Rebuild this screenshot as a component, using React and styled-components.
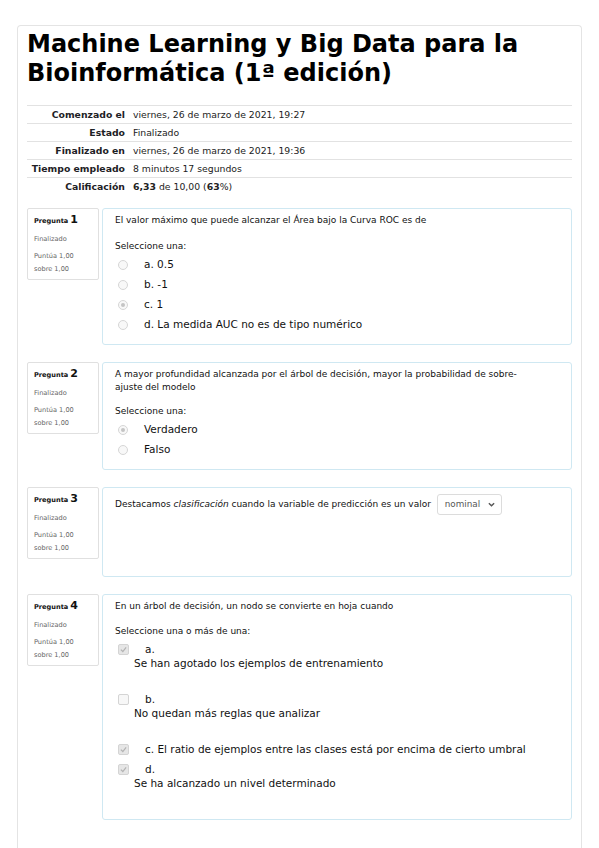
import styled, { createGlobalStyle } from "styled-components";

const GlobalStyle = createGlobalStyle`
  body {
    margin: 0;
    background: #fff;
    font-family: "DejaVu Sans", Verdana, sans-serif;
    color: #1d2125;
  }
`;

const Page = styled.div`
  padding: 25px 17px 0;
`;

const Card = styled.div`
  border: 1px solid #e4e4e4;
  border-bottom: none;
  border-radius: 4px 4px 0 0;
  padding: 4px 9px 30px;
`;

const Title = styled.h1`
  margin: 0 0 17px;
  font-size: 24px;
  line-height: 29px;
  font-weight: bold;
  color: #000;
`;

const Summary = styled.table`
  width: 100%;
  border-collapse: collapse;
  font-size: 9.3px;
  margin-bottom: 13px;

  tr {
    border-top: 1px solid #e2e2e2;
  }
  th {
    width: 98px;
    text-align: right;
    font-weight: bold;
    padding: 0 8px 0 0;
    height: 17px;
    white-space: nowrap;
  }
  td {
    padding: 0;
    color: #222;
  }
`;

const Question = styled.div`
  display: flex;
  align-items: flex-start;
  gap: 3px;
  margin-bottom: 17px;
`;

const Info = styled.div`
  width: 58px;
  flex: none;
  border: 1px solid #e0e0e0;
  border-radius: 2px;
  background: #fff;
  padding: 4px 6px 3px;
  font-size: 6.6px;
  color: #666;
  line-height: 13px;
`;

const QNo = styled.div`
  color: #111;
  font-weight: bold;
  margin-bottom: 5px;

  span {
    font-size: 11px;
    margin-left: 2px;
  }
`;

const State = styled.div`
  margin-bottom: 4px;
`;

const Formulation = styled.div`
  flex: 1;
  box-sizing: border-box;
  min-height: ${(p) => p.$minHeight || 0}px;
  border: 1px solid #cfe8f2;
  border-radius: 3px;
  background: #fff;
  padding: 5px 12px 10px;
  font-size: 9px;
  line-height: 13px;
  color: #111;
`;

const QText = styled.div`
  margin: 0 0 ${(p) => p.$gap ?? 13}px;

  em {
    font-style: italic;
  }
`;

const Prompt = styled.div`
  margin-bottom: 1px;
`;

const Answer = styled.div`
  font-size: 10.5px;
  line-height: 14px;
`;

const Option = styled.div`
  display: flex;
  align-items: flex-start;
  padding: 3px 0;
`;

const Radio = styled.span`
  flex: none;
  width: 8px;
  height: 8px;
  margin: 3px 0 0 3px;
  border: 1px solid #d6d6d6;
  border-radius: 50%;
  background: #f8f8f8;
  display: flex;
  align-items: center;
  justify-content: center;

  &::after {
    content: "";
    width: 4px;
    height: 4px;
    border-radius: 50%;
    background: ${(p) => (p.$checked ? "#c4c4c4" : "transparent")};
  }
`;

const Check = styled.span`
  flex: none;
  width: 9px;
  height: 9px;
  margin: 2px 0 0 3px;
  border: 1px solid #d4d4d4;
  border-radius: 2px;
  background: ${(p) => (p.$checked ? "#e6e6e6" : "#f7f7f7")};
  display: flex;
  align-items: center;
  justify-content: center;
`;

const Label = styled.div`
  margin-left: 16px;

  p {
    margin: 0 0 16px -11px;
  }
`;

const Select = styled.span`
  display: inline-flex;
  align-items: center;
  gap: 8px;
  height: 19px;
  padding: 0 6px 0 7px;
  margin-left: 3px;
  border: 1px solid #dcdcdc;
  border-radius: 3px;
  color: #555;
  font-size: 8.8px;
`;

const Sentence = styled.div`
  display: flex;
  align-items: center;
  margin-top: 1px;
  white-space: pre;
`;

const CheckMark = () => (
  <svg width="7" height="7" viewBox="0 0 8 8">
    <path d="M1 4.2 L3.2 6.3 L7 1.6" fill="none" stroke="#b3b3b3" strokeWidth="1.4" />
  </svg>
);

const summary = [
  ["Comenzado el", "viernes, 26 de marzo de 2021, 19:27"],
  ["Estado", "Finalizado"],
  ["Finalizado en", "viernes, 26 de marzo de 2021, 19:36"],
  ["Tiempo empleado", "8 minutos 17 segundos"],
  [
    "Calificación",
    <>
      <b>6,33</b> de 10,00 (<b>63</b>%)
    </>,
  ],
];

const QInfo = ({ n }) => (
  <Info>
    <QNo>
      Pregunta<span>{n}</span>
    </QNo>
    <State>Finalizado</State>
    <div>Puntúa 1,00</div>
    <div>sobre 1,00</div>
  </Info>
);

export default function App() {
  return (
    <>
      <GlobalStyle />
      <Page>
        <Card>
          <Title>Machine Learning y Big Data para la Bioinformática (1ª edición)</Title>

          <Summary>
            <tbody>
              {summary.map(([k, v]) => (
                <tr key={k}>
                  <th>{k}</th>
                  <td>{v}</td>
                </tr>
              ))}
            </tbody>
          </Summary>

          <Question>
            <QInfo n={1} />
            <Formulation>
              <QText>El valor máximo que puede alcanzar el Área bajo la Curva ROC es de</QText>
              <Prompt>Seleccione una:</Prompt>
              <Answer>
                {["a. 0.5", "b. -1", "c. 1", "d. La medida AUC no es de tipo numérico"].map((t, i) => (
                  <Option key={t}>
                    <Radio $checked={i === 2} />
                    <Label>{t}</Label>
                  </Option>
                ))}
              </Answer>
            </Formulation>
          </Question>

          <Question>
            <QInfo n={2} />
            <Formulation>
              <QText $gap={11}>
                A mayor profundidad alcanzada por el árbol de decisión, mayor la probabilidad de sobre-
                <br />
                ajuste del modelo
              </QText>
              <Prompt>Seleccione una:</Prompt>
              <Answer>
                <Option>
                  <Radio $checked />
                  <Label>Verdadero</Label>
                </Option>
                <Option>
                  <Radio />
                  <Label>Falso</Label>
                </Option>
              </Answer>
            </Formulation>
          </Question>

          <Question>
            <QInfo n={3} />
            <Formulation $minHeight={90}>
              <Sentence>
                Destacamos <em>clasificación</em> cuando la variable de predicción es un valor{" "}
                <Select>
                  nominal
                  <svg width="7" height="5" viewBox="0 0 8 5">
                    <path d="M1 1 L4 4 L7 1" fill="none" stroke="#555" strokeWidth="1.6" />
                  </svg>
                </Select>
              </Sentence>
            </Formulation>
          </Question>

          <Question>
            <QInfo n={4} />
            <Formulation>
              <QText $gap={12}>En un árbol de decisión, un nodo se convierte en hoja cuando</QText>
              <Prompt>Seleccione una o más de una:</Prompt>
              <Answer>
                <Option>
                  <Check $checked>
                    <CheckMark />
                  </Check>
                  <Label>
                    a.
                    <p>Se han agotado los ejemplos de entrenamiento</p>
                  </Label>
                </Option>
                <Option>
                  <Check />
                  <Label>
                    b.
                    <p>No quedan más reglas que analizar</p>
                  </Label>
                </Option>
                <Option>
                  <Check $checked>
                    <CheckMark />
                  </Check>
                  <Label>c. El ratio de ejemplos entre las clases está por encima de cierto umbral</Label>
                </Option>
                <Option>
                  <Check $checked>
                    <CheckMark />
                  </Check>
                  <Label>
                    d.
                    <p>Se ha alcanzado un nivel determinado</p>
                  </Label>
                </Option>
              </Answer>
            </Formulation>
          </Question>
        </Card>
      </Page>
    </>
  );
}
